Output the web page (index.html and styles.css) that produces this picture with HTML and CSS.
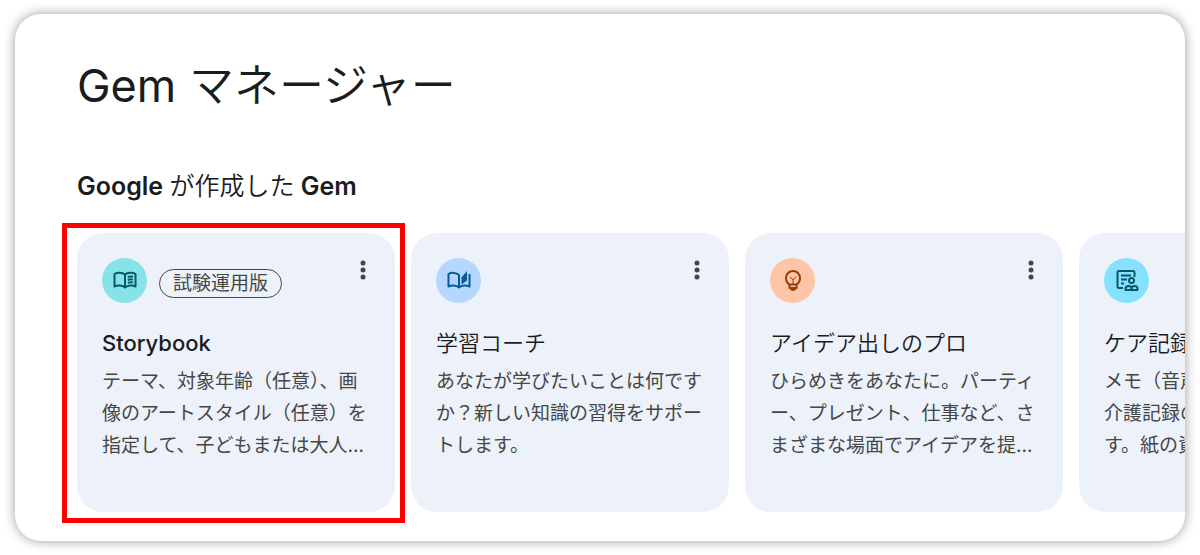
FILE: index.html
```html
<!DOCTYPE html>
<html lang="ja">

<head>
    <meta charset="UTF-8">
    <meta name="viewport" content="width=device-width, initial-scale=1.0">
    <title>Gem マネージャー</title>
    <link rel="stylesheet" href="styles.css">
</head>

<body>

    <main class="panel">
        <h1>Gem <span class="light">マネージャー</span></h1>

        <!-- Premade Gems -->
        <section>
            <h2>Google <span class="light">が作成した</span> Gem</h2>

            <div class="gem-list">

                <article class="gem-card selected">
                    <div class="gem-top">
                        <span class="gem-icon teal">
                            <svg viewBox="0 0 24 24" aria-hidden="true">
                                <path d="M12 5.500C9.500 3.500 4.500 3.200 1.500 5v12.500C4.500 16 9.500 16.200 12 18.500C14.500 16.200 19.500 16 22.500 17.500V5C19.500 3.200 14.500 3.500 12 5.500z" />
                                <path d="M12 5.500v13" />
                                <path d="M14.800 8.200C16.500 7.500 18.300 7.400 20 7.800M14.800 11C16.500 10.300 18.300 10.200 20 10.600M14.800 13.800C16.500 13.100 18.300 13 20 13.400" />
                            </svg>
                        </span>
                        <span class="badge">試験運用版</span>
                        <button class="menu" type="button" aria-label="その他">
                            <svg viewBox="0 0 24 24" aria-hidden="true">
                                <circle cx="12" cy="5" r="2.500" />
                                <circle cx="12" cy="12" r="2.500" />
                                <circle cx="12" cy="19" r="2.500" />
                            </svg>
                        </button>
                    </div>
                    <h3>Storybook</h3>
                    <p>テーマ、対象年齢（任意）、画像のアートスタイル（任意）を指定して、子どもまたは大人...</p>
                </article>

                <article class="gem-card">
                    <div class="gem-top">
                        <span class="gem-icon blue">
                            <svg viewBox="0 0 24 24" aria-hidden="true">
                                <path d="M12 17.500V6C9.500 3.500 4.500 3.200 1.500 5v12.500C4.500 16 9.500 16.200 12 18.500C14.500 16.200 19.500 16 22.500 17.500V5" />
                                <path class="fill" d="M14.500 8.500l5.500-6.500v9.500l-5.500 4z" />
                            </svg>
                        </span>
                        <button class="menu" type="button" aria-label="その他">
                            <svg viewBox="0 0 24 24" aria-hidden="true">
                                <circle cx="12" cy="5" r="2.500" />
                                <circle cx="12" cy="12" r="2.500" />
                                <circle cx="12" cy="19" r="2.500" />
                            </svg>
                        </button>
                    </div>
                    <h3 class="light">学習コーチ</h3>
                    <p>あなたが学びたいことは何ですか？新しい知識の習得をサポートします。</p>
                </article>

                <article class="gem-card">
                    <div class="gem-top">
                        <span class="gem-icon orange">
                            <svg viewBox="0 0 24 24" aria-hidden="true">
                                <path d="M8.500 15.500C6 14 5 11.500 5 9a7 7 0 0 1 14 0c0 2.500-1 5-3.500 6.500z" />
                                <path d="M8.500 15.500v3.500h7v-3.500" />
                                <path class="fill" d="M9 19h6a3 3 0 0 1-6 0z" />
                                <path class="thin" d="M12 15v-4.500M8.800 7.800l3.200 3 3.200-3" />
                            </svg>
                        </span>
                        <button class="menu" type="button" aria-label="その他">
                            <svg viewBox="0 0 24 24" aria-hidden="true">
                                <circle cx="12" cy="5" r="2.500" />
                                <circle cx="12" cy="12" r="2.500" />
                                <circle cx="12" cy="19" r="2.500" />
                            </svg>
                        </button>
                    </div>
                    <h3 class="light">アイデア出しのプロ</h3>
                    <p>ひらめきをあなたに。パーティー、プレゼント、仕事など、さまざまな場面でアイデアを提...</p>
                </article>

                <article class="gem-card">
                    <div class="gem-top">
                        <span class="gem-icon cyan">
                            <svg viewBox="0 0 24 24" aria-hidden="true">
                                <path d="M19.500 8V3.500a1.500 1.500 0 0 0-1.500-1.500H4a1.500 1.500 0 0 0-1.500 1.500v14A1.500 1.500 0 0 0 4 19h4" />
                                <path d="M6 6.500h10M6 10.500h6M6 14.500h3" />
                                <circle cx="16.500" cy="11.500" r="2.500" />
                                <path d="M10.500 21v-1c0-2 1.500-3 3-3s3 1 3 3v1zM16.500 21v-1c0-2 1.500-3 3-3s3 1 3 3v1z" />
                            </svg>
                        </span>
                        <button class="menu" type="button" aria-label="その他">
                            <svg viewBox="0 0 24 24" aria-hidden="true">
                                <circle cx="12" cy="5" r="2.500" />
                                <circle cx="12" cy="12" r="2.500" />
                                <circle cx="12" cy="19" r="2.500" />
                            </svg>
                        </button>
                    </div>
                    <h3 class="light">ケア記録アシスタント</h3>
                    <p>メモ（音声入力も可）をもとに介護記録の文案をすぐ作成します。紙の資料も読み取れます。</p>
                </article>

            </div>
        </section>
    </main>

</body>
</html>
```

FILE: styles.css
```css
/* General Reset */
* {
    margin: 0;
    padding: 0;
    box-sizing: border-box;
}

body {
    padding: 14px 15px;
    font-family: Inter, "Noto Sans CJK JP", sans-serif;
    color: #1b1c1d;
    background-color: #fff;
}

/* Panel */
.panel {
    padding: 44px 0 29px 62px;
    overflow: hidden;
    border-radius: 26px;
    background-color: #fff;
    box-shadow: 0 0 12px rgba(0, 0, 0, 0.4);
}

h1 {
    margin-bottom: 56px;
    font-size: 45px;
    font-weight: 400;
    line-height: 56px;
}

h2 {
    margin-bottom: 31px;
    font-size: 25px;
    font-weight: 600;
    line-height: 32px;
}

/* Gem Cards */
.gem-list {
    display: flex;
    gap: 16px;
}

.gem-card {
    position: relative;
    flex: 0 0 318px;
    padding: 25px 25px 50px;
    border-radius: 26px;
    background-color: #edf1f9;
}

/* Red frame around the selected card */
.selected::after {
    content: "";
    position: absolute;
    top: -10px;
    right: -10px;
    bottom: -11px;
    left: -15px;
    border: 5px solid #fe0000;
}

.gem-top {
    display: flex;
    align-items: center;
    gap: 12px;
    margin-bottom: 24px;
}

.gem-icon {
    display: flex;
    align-items: center;
    justify-content: center;
    width: 45px;
    height: 45px;
    border-radius: 50%;
}

    .gem-icon svg {
        width: 24px;
        height: 24px;
        fill: none;
        stroke: currentColor;
        stroke-width: 2;
        stroke-linejoin: round;
    }

    .gem-icon .fill {
        fill: currentColor;
        stroke: none;
    }

    .gem-icon .thin {
        stroke-width: 1;
    }

.teal {
    color: #07586a;
    background-color: #87e3e7;
}

.blue {
    color: #075b96;
    background-color: #b5d7ff;
}

.orange {
    color: #943e07;
    background-color: #ffc5a6;
}

.cyan {
    color: #095869;
    background-color: #85e1ff;
}

.badge {
    margin-top: 5px;
    padding: 0 13px;
    border: 1px solid #444746;
    border-radius: 15px;
    color: #444746;
    font-size: 19px;
    line-height: 27px;
}

.menu {
    align-self: flex-start;
    width: 24px;
    height: 24px;
    margin-left: auto;
    margin-right: -5px;
    border: none;
    background: none;
    cursor: pointer;
}

    .menu svg {
        display: block;
        width: 24px;
        height: 24px;
        fill: #444746;
    }

h3 {
    margin-bottom: 7px;
    font-size: 22px;
    font-weight: 500;
    line-height: 32px;
}

.gem-card p {
    color: #444746;
    font-size: 19px;
    line-height: 32px;
}

/* Thinner weight for Japanese text */
.light {
    font-weight: 350;
}
```
